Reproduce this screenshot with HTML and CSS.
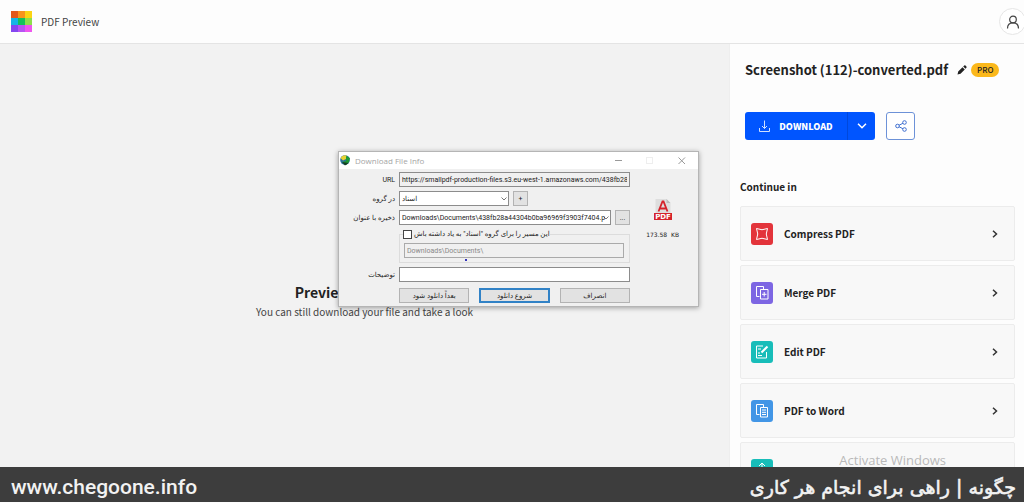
FILE: index.html
```html
<!DOCTYPE html>
<html lang="en">
<head>
  <meta charset="utf-8">
  <title>PDF Preview</title>
  <link rel="stylesheet" href="styles.css">
</head>
<body>
  <header class="topbar">
    <svg class="logo" viewBox="0 0 21 21">
      <rect width="7" height="7" fill="#e2571b"/><rect x="7" width="7" height="7" fill="#f8931c"/><rect x="14" width="7" height="7" fill="#fbd413"/>
      <rect y="7" width="7" height="7" fill="#16b4e6"/><rect x="7" y="7" width="7" height="7" fill="#12c15c"/><rect x="14" y="7" width="7" height="7" fill="#8ede4b"/>
      <rect y="14" width="7" height="7" fill="#8446f0"/><rect x="7" y="14" width="7" height="7" fill="#b753f3"/><rect x="14" y="14" width="7" height="7" fill="#ef55ee"/>
    </svg>
    <span class="topbar-title">PDF Preview</span>
    <button class="account" aria-label="Account">
      <svg width="14" height="14" viewBox="0 0 14 14" fill="none" stroke="#444" stroke-width="1.2"><circle cx="7" cy="4.500" r="3.300"/><path d="M1.500 13.500C1.500 10 3.500 7.800 7 7.800s5.500 2.200 5.500 5.700"/></svg>
    </button>
  </header>

  <main class="main">
    <section class="preview">
      <h2>Preview unavailable</h2>
      <p>You can still download your file and take a look</p>
    </section>

    <aside class="sidebar">
      <div class="file">
        <h1>Screenshot (112)-converted.pdf</h1>
        <svg class="pencil" width="10" height="10" viewBox="0 0 10 10" fill="#222"><path d="M0.500 9.500l0.700-3L5.500 2.200l2.300 2.300L3.500 8.800zM6.200 1.500L7.300 0.500q.6-.4 1.200.1l.9.900q.5.600 0 1.200L8.500 3.800z"/></svg>
        <span class="pro">PRO</span>
      </div>
      <div class="actions">
        <div class="download-group">
          <button class="download">
            <svg width="11" height="12" viewBox="0 0 11 12" fill="none" stroke="#cfe0ff"><path d="M5.500 0.500v8M3 6l2.500 2.500L8 6M0.500 8v3.500h10V8"/></svg>
            DOWNLOAD
          </button>
          <button class="download-more" aria-label="More">
            <svg width="10" height="6" viewBox="0 0 10 6" fill="none" stroke="#fff" stroke-width="1.500"><path d="M1 0.800l4 4 4-4"/></svg>
          </button>
        </div>
        <button class="share" aria-label="Share">
          <svg width="12" height="12" viewBox="0 0 12 12" fill="none" stroke="#3f6fd0"><circle cx="2.500" cy="6" r="1.800"/><circle cx="9.500" cy="2.500" r="1.800"/><circle cx="9.500" cy="9.500" r="1.800"/><path d="M4.100 5.200l3.800-1.900M4.100 6.800l3.800 1.900"/></svg>
        </button>
      </div>

      <h3>Continue in</h3>
      <nav class="tools">
        <a class="tool" href="#">
          <svg class="tool-icon red" viewBox="0 0 22 22"><path d="M5.500 5.500q5.500 2.500 11 0-2.500 5.500 0 11-5.500-2.500-11 0 2.500-5.500 0-11z"/></svg>
          <span>Compress PDF</span>
          <svg class="chevron" viewBox="0 0 6 8"><path d="M1 0.700L4.500 4 1 7.300"/></svg>
        </a>
        <a class="tool" href="#">
          <svg class="tool-icon purple" viewBox="0 0 22 22"><path d="M8.500 14.500h-3v-10h7v3M9.500 7.500h7.500v9.500H9.500zM13.200 10v4.500M11 12.300h4.500"/></svg>
          <span>Merge PDF</span>
          <svg class="chevron" viewBox="0 0 6 8"><path d="M1 0.700L4.500 4 1 7.300"/></svg>
        </a>
        <a class="tool" href="#">
          <svg class="tool-icon teal" viewBox="0 0 22 22"><path d="M12 5H5.500v12h10v-6M7 8h3M7 12h2M7 14.500h4"/><path stroke-width="2" d="M10.500 11.500L16.500 5.500"/></svg>
          <span>Edit PDF</span>
          <svg class="chevron" viewBox="0 0 6 8"><path d="M1 0.700L4.500 4 1 7.300"/></svg>
        </a>
        <a class="tool" href="#">
          <svg class="tool-icon blue" viewBox="0 0 22 22"><path d="M8.500 14.500h-3v-10h7v3M9.500 7.500h7v9.500h-7zM11 10h4M11 12.300h4M11 14.500h4"/></svg>
          <span>PDF to Word</span>
          <svg class="chevron" viewBox="0 0 6 8"><path d="M1 0.700L4.500 4 1 7.300"/></svg>
        </a>
        <a class="tool" href="#" aria-label="More tools">
          <svg class="tool-icon teal" viewBox="0 0 22 22"><path d="M11 4v10M8 7l3-3 3 3M6 10v7h10v-7"/></svg>
        </a>
      </nav>
    </aside>
  </main>

  <div class="watermark">Activate Windows</div>

  <footer class="banner">
    <span>www.chegoone.info</span>
    <span class="banner-fa" dir="rtl" lang="fa">چگونه | راهی برای انجام هر کاری</span>
  </footer>

  <form class="dialog">
    <div class="dialog-title">
      <svg width="11" height="11" viewBox="0 0 11 11"><circle cx="5" cy="5" r="4.800" fill="#2a6f9c"/><path d="M0.500 3Q3-1 7 0.700L6 4 3 5.500z" fill="#e7d232"/><path d="M6 1l4 2-1 4-3 3-4-3 4-1z" fill="#1c9a35"/><path d="M2 7l3 3.500L8.500 8z" fill="#173b23"/></svg>
      <span>Download File Info</span>
      <svg class="window-controls" width="72" height="9" viewBox="0 0 72 9" fill="none"><path d="M1 4.500h7" stroke="#999"/><rect x="32.500" y="1.500" width="6" height="6" stroke="#eee"/><path d="M64.500 1.500l6.500 6.500M71 1.500L64.500 8" stroke="#999"/></svg>
    </div>
    <div class="dialog-body">
      <div class="fields">
        <label for="url">URL</label>
        <input id="url" class="url" readonly value="https://smallpdf-production-files.s3.eu-west-1.amazonaws.com/438fb28a">

        <label for="group">در گروه</label>
        <div class="row">
          <select id="group" class="group"><option>اسناد</option></select>
          <button type="button" class="small">+</button>
        </div>

        <label for="save">ذخیره با عنوان</label>
        <div class="row">
          <select id="save" class="save"><option>Downloads\Documents\438fb28a44304b0ba96969f3903f7404.p</option></select>
          <button type="button" class="small">...</button>
        </div>

        <div class="remember">
          <div class="remember-head">
            <input type="checkbox" id="remember">
            <label for="remember" dir="rtl">این مسیر را برای گروه "اسناد" به یاد داشته باش</label>
          </div>
          <input class="path" aria-label="Path" disabled value="Downloads\Documents\">
          <i class="dot"></i>
        </div>

        <label for="desc">توضیحات</label>
        <input id="desc">

        <div class="buttons">
          <button type="button">بعداً دانلود شود</button>
          <button type="button" class="primary">شروع دانلود</button>
          <button type="button">انصراف</button>
        </div>
      </div>
      <div class="size">
        <svg width="18" height="24" viewBox="0 0 18 22"><path d="M1.500 0h11l4 4v17h-15z" fill="#dedede"/><path d="M12.500 0v4h4z" fill="#bbb"/><path d="M4.500 12.500L8.500 2.500h1l4 10M6 9.500h6" fill="none" stroke="#d5222b" stroke-width="1.800"/><rect y="14" width="18" height="7" fill="#d5222b"/><text x="9" y="20" text-anchor="middle" font-size="7" font-weight="bold" fill="#fff">PDF</text></svg>
        <span>173.58&nbsp; KB</span>
      </div>
    </div>
  </form>
</body>
</html>
```
FILE: styles.css
```css
* {
  box-sizing: border-box;
}
body {
  margin: 0;
  height: 100vh;
  padding-bottom: 1px;
  display: flex;
  flex-direction: column;
  overflow: hidden;
  background: #fdfdfd;
  color: #222;
  font-family: "Noto Sans CJK SC", "Noto Sans", sans-serif;
}
button, input, select {
  font: inherit;
  color: inherit;
  margin: 0;
  padding: 0;
}
h1, h2, h3, p {
  margin: 0;
}

/* header */
.topbar {
  flex: none;
  height: 44px;
  display: flex;
  align-items: center;
  gap: 9px;
  padding-left: 11px;
  border-bottom: 1px solid #e4e4e4;
}
.logo {
  width: 21px;
  height: 21px;
}
.topbar-title {
  font-size: 10px;
  line-height: 16px;
  color: #444;
}
.account {
  margin-left: auto;
  margin-right: -2px;
  width: 27px;
  height: 27px;
  display: grid;
  place-items: center;
  border: 1px solid #e6e6e6;
  border-radius: 50%;
  background: #fff;
}

/* layout */
.main {
  flex: 1;
  min-height: 0;
  display: flex;
}
.preview {
  flex: 1;
  display: flex;
  flex-direction: column;
  align-items: center;
  justify-content: center;
  gap: 2px;
  padding-top: 90px;
  background: #f2f2f2;
}
.preview h2 {
  font-size: 14px;
  line-height: 20px;
}
.preview p {
  font-size: 10px;
  line-height: 16px;
  color: #444;
}
.sidebar {
  width: 295px;
  overflow: hidden;
  padding: 16px 9px 0 10px;
  border-left: 1px solid #eee;
}

/* file and actions */
.file {
  display: flex;
  align-items: center;
  padding-left: 5px;
}
.file h1 {
  font-size: 13px;
  line-height: 20px;
  white-space: nowrap;
}
.pencil {
  margin: 0 4px 0 9px;
}
.pro {
  padding: 0 6px;
  border-radius: 7px;
  background: #fbb81b;
  font-size: 8px;
  line-height: 14px;
  font-weight: 500;
}
.actions {
  display: flex;
  gap: 11px;
  margin-top: 32px;
  padding-left: 5px;
}
.download-group {
  display: flex;
  height: 28px;
  border-radius: 3px;
  overflow: hidden;
}
.download, .download-more {
  display: flex;
  align-items: center;
  justify-content: center;
  border: 0;
  background: #0055ff;
  color: #fff;
}
.download {
  width: 102px;
  gap: 9px;
  font-size: 9px;
  font-weight: 900;
}
.download-more {
  width: 28px;
  border-left: 1px solid #0048dc;
}
.share {
  width: 29px;
  height: 28px;
  display: grid;
  place-items: center;
  border: 1px solid #6d92d8;
  border-radius: 3px;
  background: #fff;
}

/* tools */
.sidebar h3 {
  margin: 39px 0 11px;
  font-size: 10px;
  line-height: 16px;
}
.tools {
  display: flex;
  flex-direction: column;
  gap: 4px;
}
.tool {
  height: 55px;
  flex: none;
  display: flex;
  align-items: center;
  gap: 11px;
  padding: 0 16px 0 10px;
  border: 1px solid #ececec;
  border-radius: 2px;
  background: #f8f8f8;
  color: #222;
  font-size: 10px;
  font-weight: bold;
  text-decoration: none;
}
.tool-icon {
  width: 22px;
  height: 22px;
  border-radius: 3px;
  fill: none;
  stroke: #fff;
}
.red { background: #e3343b; }
.purple { background: #7d66e3; }
.teal { background: #18bdb9; }
.blue { background: #4296e6; }
.chevron {
  width: 6px;
  height: 8px;
  margin-left: auto;
  fill: none;
  stroke: #333;
  stroke-width: 1.5;
}

/* bottom */
.watermark {
  position: absolute;
  right: 78px;
  bottom: 34px;
  font: 13px/18px "Open Sans", sans-serif;
  color: #b9b9b9;
}
.banner {
  position: relative;
  flex: none;
  height: 35px;
  display: flex;
  align-items: center;
  justify-content: space-between;
  padding: 4px 8px 0 11px;
  background: #3d3d3d;
  color: #f2f2f2;
  font: 500 21px/28px Roboto, sans-serif;
}
.banner-fa {
  font-family: "DejaVu Sans", sans-serif;
  font-size: 19px;
  font-weight: normal;
  -webkit-text-stroke: 0.6px #f2f2f2;
}

/* download dialog */
.dialog {
  position: absolute;
  left: 338px;
  top: 151px;
  width: 361px;
  border: 1px solid #b5b5b5;
  background: #f0f0f0;
  box-shadow: 0 1px 5px rgba(0, 0, 0, 0.35);
  font: 7px/10px Roboto, "DejaVu Sans", sans-serif;
}
.dialog-title {
  height: 17px;
  display: flex;
  align-items: center;
  gap: 4px;
  padding: 0 12px 0 1px;
  background: #fff;
  color: #a5a5a5;
  font-family: "Open Sans", sans-serif;
  font-size: 8px;
}
.window-controls {
  margin-left: auto;
}
.dialog-body {
  display: flex;
  justify-content: space-between;
  padding: 3px 19px 3px 10px;
}
.fields {
  display: grid;
  grid-template-columns: 46px 231px;
  column-gap: 4px;
  row-gap: 4px;
  align-items: center;
}
.fields > label {
  text-align: right;
  white-space: nowrap;
}
.dialog input, .dialog select {
  width: 100%;
  height: 15px;
  padding: 0 2px;
  border: 1px solid #8c8c8c;
  border-radius: 0;
  background: #fff;
}
.dialog .url {
  background: #f0f0f0;
}
.dialog select {
  appearance: none;
  padding-right: 5px;
  background: #fff url("data:image/svg+xml,%3Csvg xmlns='http://www.w3.org/2000/svg' width='6' height='4' fill='none' stroke='%23777'%3E%3Cpath d='M.5.5L3 3 5.500.5'/%3E%3C/svg%3E") no-repeat right 1px center;
}
.row {
  display: flex;
  gap: 4px;
}
.dialog .group {
  width: 110px;
}
.row .save {
  flex: 1;
  min-width: 0;
}
.dialog button {
  height: 15px;
  border: 1px solid #b3b3b3;
  background: #e2e2e2;
}
.dialog .small {
  width: 15px;
}
.remember {
  grid-column: 2;
  position: relative;
  height: 34px;
}
.remember::before {
  content: "";
  position: absolute;
  inset: 5px 0 0 0;
  border: 1px solid #dcdcdc;
}
.remember-head {
  position: relative;
  width: max-content;
  display: flex;
  align-items: center;
  gap: 2px;
  margin: 0 0 4px 4px;
  background: #f0f0f0;
}
.dialog .remember-head input {
  appearance: none;
  width: 9px;
  height: 9px;
  border-color: #444;
}
.dialog .path {
  position: relative;
  display: block;
  width: 220px;
  margin-left: 5px;
  background: #f0f0f0;
  border-color: #aaa;
  color: #888;
}
.dot {
  position: absolute;
  left: 66px;
  bottom: 2px;
  width: 2px;
  height: 2px;
  background: #3434bb;
}
.buttons {
  grid-column: 2;
  display: grid;
  grid-template-columns: repeat(3, 1fr);
  gap: 10px;
  margin-top: 2px;
}
.dialog .primary {
  border: 2px solid #3182c6;
}
.size {
  display: flex;
  flex-direction: column;
  align-items: center;
  gap: 8px;
  padding-top: 26px;
  font-family: "DejaVu Sans", sans-serif;
  font-size: 6px;
}
```
